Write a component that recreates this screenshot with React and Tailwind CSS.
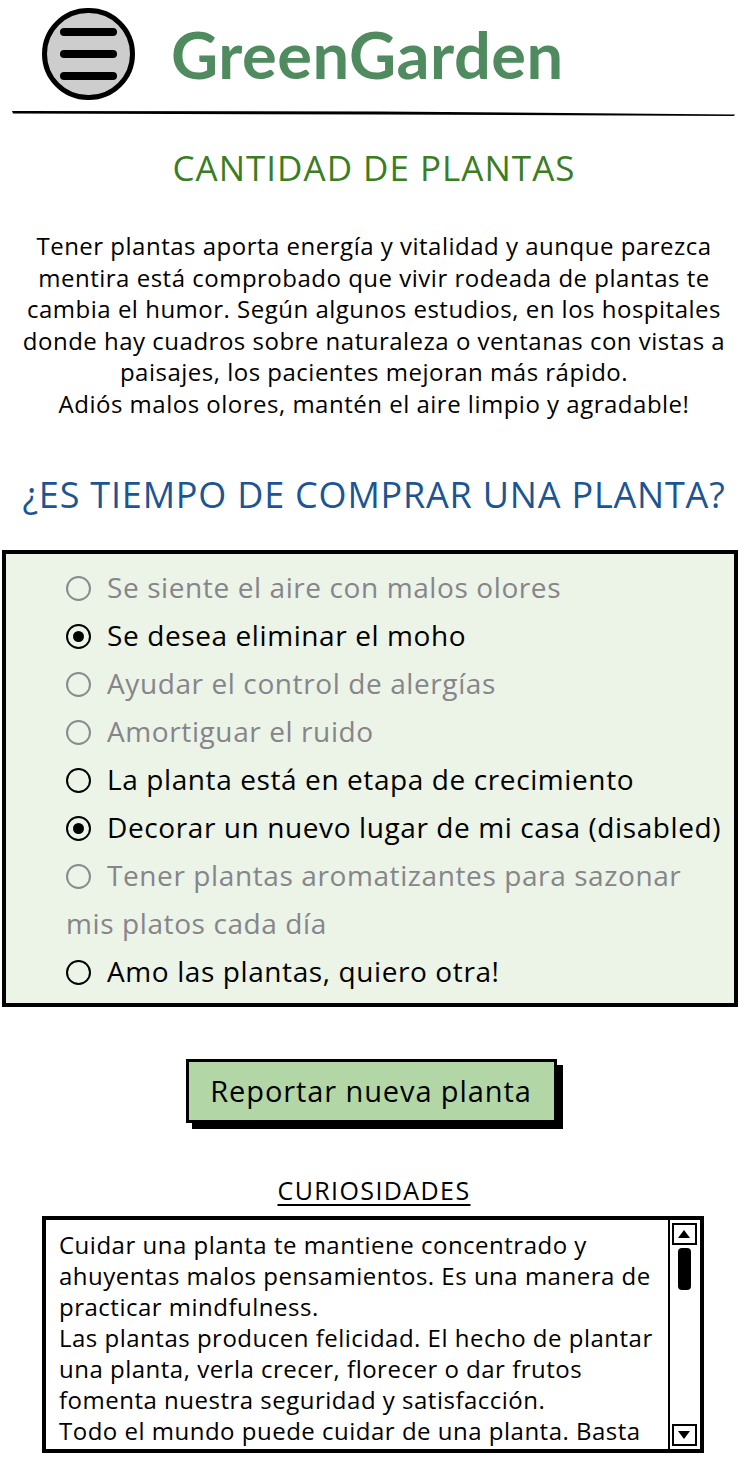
import { useState } from 'react'

const FONT = { fontFamily: '"Open Sans", Lato, sans-serif' }

const OPTIONS = [
  { label: 'Se siente el aire con malos olores', disabled: true },
  { label: 'Se desea eliminar el moho', checked: true },
  { label: 'Ayudar el control de alergías', disabled: true },
  { label: 'Amortiguar el ruido', disabled: true },
  { label: 'La planta está en etapa de crecimiento' },
  { label: 'Decorar un nuevo lugar de mi casa (disabled)', checked: true },
  { label: ['Tener plantas aromatizantes para sazonar', 'mis platos cada día'], disabled: true },
  { label: 'Amo las plantas, quiero otra!' },
]

function Radio({ checked, disabled }) {
  return (
    <span
      className={`inline-flex items-center justify-center w-[25px] h-[25px] rounded-full align-middle relative top-[-2px] mr-[16px] ${
        disabled ? 'border-2 border-[#8a8a8f]' : 'border-[2.5px] border-black'
      }`}
    >
      {checked && <span className="w-[11px] h-[11px] rounded-full bg-black" />}
    </span>
  )
}

function Header() {
  return (
    <div className="pt-[8px]">
      <div className="flex items-center">
        <div className="ml-[42px] w-[93px] h-[92px] rounded-full border-[5px] border-black bg-[#cdcdcd] flex flex-col items-center justify-center gap-[14px]">
          <span className="block w-[57px] h-[8px] rounded-full bg-black" />
          <span className="block w-[57px] h-[8px] rounded-full bg-black" />
          <span className="block w-[57px] h-[8px] rounded-full bg-black" />
        </div>
        <h1 className="ml-[36px] text-[65px] leading-none font-bold text-[#4f8b5e] tracking-[0.5px]" style={{ fontFamily: 'Lato, sans-serif' }}>
          GreenGarden
        </h1>
      </div>
      <svg className="block mt-[6px]" width="748" height="12" viewBox="0 0 748 12">
        <path d="M12 5 L380 5.5 L735 8.5 L734 10 L380 8.5 L13 7.5 Z" fill="#000" />
      </svg>
    </div>
  )
}

export default function App() {
  const [options] = useState(OPTIONS)

  return (
    <div className="w-[748px] min-h-[1470px] bg-white text-black" style={FONT}>
      <Header />

      <h2 className="mt-[30px] text-center text-[35px] leading-[40px] tracking-[1px] text-[#3b7d23]">CANTIDAD DE PLANTAS</h2>

      <p className="mt-[42px] text-center text-[24px] leading-[31.6px] tracking-[0.5px]">
        <span className="block whitespace-nowrap">Tener plantas aporta energía y vitalidad y aunque parezca</span>
        <span className="block whitespace-nowrap">mentira está comprobado que vivir rodeada de plantas te</span>
        <span className="block whitespace-nowrap">cambia el humor. Según algunos estudios, en los hospitales</span>
        <span className="block whitespace-nowrap">donde hay cuadros sobre naturaleza o ventanas con vistas a</span>
        <span className="block whitespace-nowrap">paisajes, los pacientes mejoran más rápido.</span>
        <span className="block whitespace-nowrap">Adiós malos olores, mantén el aire limpio y agradable!</span>
      </p>

      <h2 className="mt-[53px] text-center text-[36px] leading-[44px] tracking-[0.8px] text-[#1b5593]">¿ES TIEMPO DE COMPRAR UNA PLANTA?</h2>

      <div className="mt-[33px] mx-[2px] w-[736px] border-[4px] border-black bg-[#ecf3e7] pl-[60px] pt-[9px] pb-[8px]">
        {options.map((o, i) => (
          <div
            key={i}
            className={`text-[28px] leading-[48px] tracking-[0.6px] whitespace-nowrap ${o.disabled ? 'text-[#85858b]' : 'text-black'}`}
          >
            <Radio checked={o.checked} disabled={o.disabled} />
            {Array.isArray(o.label) ? (
              <>
                {o.label[0]}
                <br />
                {o.label[1]}
              </>
            ) : (
              o.label
            )}
          </div>
        ))}
      </div>

      <div className="mt-[52px] flex justify-center">
        <button className="w-[371px] h-[64px] border-[3px] border-black bg-[#b3d6a7] shadow-[6px_6px_0_#000] text-[29px] tracking-[0.9px] ml-[-6px]">
          Reportar nueva planta
        </button>
      </div>

      <div className="mt-[52px] text-center text-[25px] leading-[30px] tracking-[1.4px]">
        <span className="underline underline-offset-[4px] decoration-[1.5px]">CURIOSIDADES</span>
      </div>

      <div className="mt-[11px] ml-[42px] w-[662px] h-[237px] border-[4px] border-black flex">
        <div className="flex-1 pl-[13px] pt-[9px] text-[24px] leading-[31px] tracking-[0.5px] overflow-hidden">
          <span className="block whitespace-nowrap">Cuidar una planta te mantiene concentrado y</span>
          <span className="block whitespace-nowrap">ahuyentas malos pensamientos. Es una manera de</span>
          <span className="block whitespace-nowrap">practicar mindfulness.</span>
          <span className="block whitespace-nowrap">Las plantas producen felicidad. El hecho de plantar</span>
          <span className="block whitespace-nowrap">una planta, verla crecer, florecer o dar frutos</span>
          <span className="block whitespace-nowrap">fomenta nuestra seguridad y satisfacción.</span>
          <span className="block whitespace-nowrap">Todo el mundo puede cuidar de una planta. Basta</span>
        </div>
        <div className="w-[32px] border-l-[2px] border-black flex flex-col items-center py-[3px] pr-[2px]">
          <div className="w-[25px] h-[22px] border-[2px] border-black flex items-center justify-center">
            <svg width="14" height="10" viewBox="0 0 14 10"><path d="M7 1 L13 9 L1 9 Z" fill="#000" /></svg>
          </div>
          <div className="mt-[3px] w-[13px] h-[42px] rounded-[4px] bg-black" />
          <div className="flex-1" />
          <div className="w-[25px] h-[22px] border-[2px] border-black flex items-center justify-center">
            <svg width="14" height="10" viewBox="0 0 14 10"><path d="M1 1 L13 1 L7 9 Z" fill="#000" /></svg>
          </div>
        </div>
      </div>
    </div>
  )
}
